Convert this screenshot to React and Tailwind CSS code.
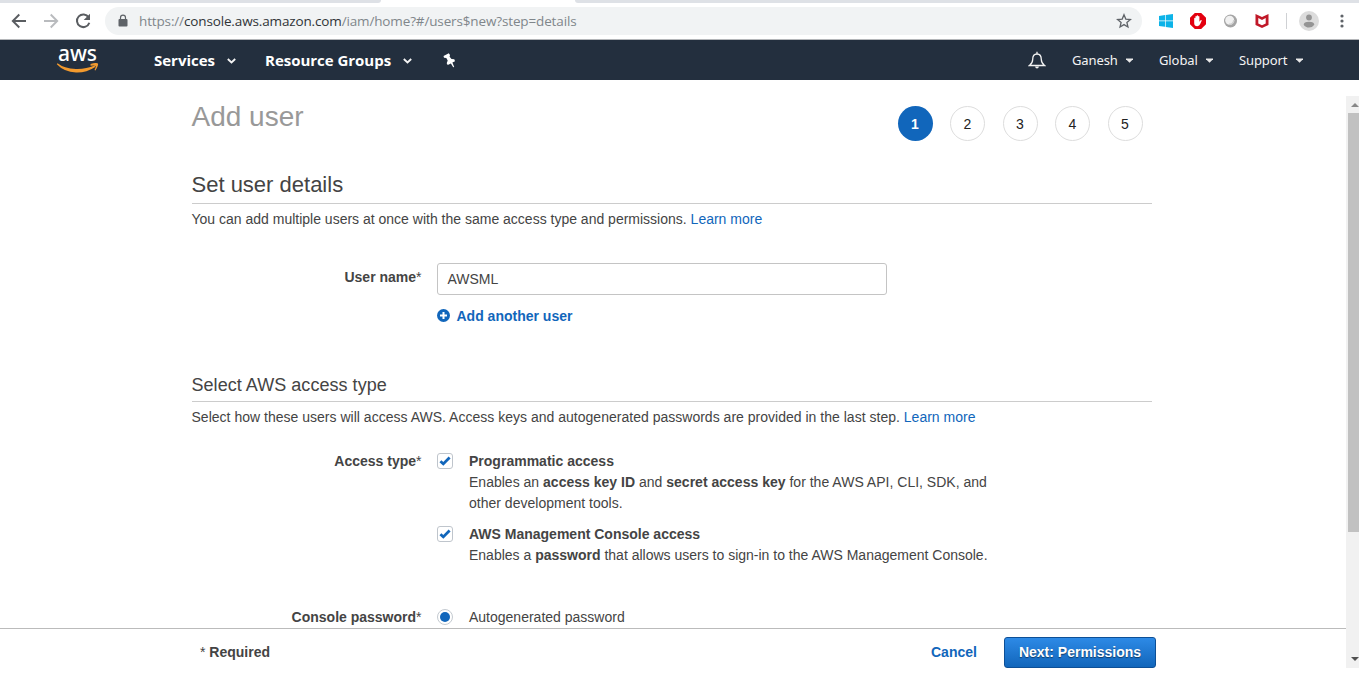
import React from "react";

const urlFont = "font-['Open_Sans',sans-serif]";

function BrowserBar() {
  return (
    <div className={`h-10 w-full shrink-0 border-b border-[#b4b6b9] bg-white ${urlFont}`}>
      <div className="flex h-[3px] w-full justify-between">
        <div className="h-[3px] w-[381px] rounded-br-[3px] bg-[#dee1e6]" />
        <div className="h-[3px] w-[784px] rounded-bl-[3px] bg-[#dee1e6]" />
      </div>
      <div className="flex h-9 items-center">
        <svg className="ml-[11px] shrink-0" width="16" height="16" viewBox="0 0 16 16" fill="none" stroke="#5a5d61" strokeWidth="1.9">
          <path d="M15 8H2M8.3 1.5 1.8 8l6.5 6.5" />
        </svg>
        <svg className="ml-4 shrink-0" width="16" height="16" viewBox="0 0 16 16" fill="none" stroke="#b9bbbe" strokeWidth="1.9">
          <path d="M1 8h13M7.700 1.500 14.200 8l-6.500 6.500" />
        </svg>
        <svg className="ml-4 shrink-0" width="16" height="16" viewBox="0 0 16 16" fill="none">
          <path d="M13.600 4.400A6.300 6.300 0 1 0 14.300 9.700" stroke="#5a5d61" strokeWidth="2" />
          <path d="M15 .8v6.300H8.700z" fill="#5a5d61" />
        </svg>
        <div className="ml-[14px] flex h-7 w-[1037px] shrink-0 items-center rounded-full bg-[#f1f3f4] pr-[10px] pl-3">
          <svg className="shrink-0" width="12" height="14" viewBox="0 0 12 14">
            <path d="M2.400 5h7.200q.9 0 .9.900v5.700q0 .9-.9.900H2.400q-.9 0-.9-.9V5.900q0-.9.900-.9z" fill="#5f6368" />
            <path d="M3.500 5.500V3.700a2.500 2.500 0 0 1 5 0v1.800" fill="none" stroke="#5f6368" strokeWidth="1.200" />
          </svg>
          <div className="ml-[10px] flex-1 text-[13.500px] leading-5 tracking-[-0.140px] whitespace-nowrap text-[#80868b]">
            https://<span className="text-[#303337]">console.aws.amazon.com</span>/iam/home?#/users$new?step=details
          </div>
          <svg className="shrink-0" width="16" height="16" viewBox="0 0 16 16" fill="none" stroke="#5f6368" strokeWidth="1.300">
            <path d="m8 1.800 1.800 4.300 4.600.4-3.500 3 1.050 4.500L8 11.600 4.050 14l1.050-4.500-3.500-3 4.600-.4z" />
          </svg>
        </div>
        <svg className="ml-[16px] shrink-0" width="16" height="16" viewBox="0 0 16 16" fill="#0cb3e8">
          <path d="M1 3l6-.9v5.400H1zM7.700 2 15 1v6.500H7.700zM1 8.300h6v5.500l-6-.9zM7.700 8.300H15v6.600l-7.300-1z" />
        </svg>
        <svg className="ml-[15px] shrink-0" width="18" height="18" viewBox="0 0 18 18">
          <path d="M5.800 1h6.400L17 5.800v6.400L12.200 17H5.800L1 12.200V5.800z" fill="#e3000f" />
          <path d="M5.200 9.300V6.200q.7-.8 1.200 0V9V4.500q.7-.9 1.300 0V8.500V3.800q.8-.9 1.400 0V8.500V4.500q.7-.8 1.300 0v5.200l1.200-1.500q.8-.4 1.200.2l-1.600 3.700q-.7 2.100-2.900 2.100Q5.200 14.200 5.200 11.200z" fill="#fff" />
        </svg>
        <svg className="ml-[16px] shrink-0" width="15" height="16" viewBox="0 0 15 16">
          <circle cx="7.500" cy="8" r="6.500" fill="#a5a5a5" />
          <circle cx="6.700" cy="7.200" r="4.500" fill="#f1f1f1" />
          <path d="M6 11.300A4.200 4.200 0 0 0 10.800 7" stroke="#d0d0d0" strokeWidth="1.500" fill="none" />
        </svg>
        <svg className="ml-[16px] shrink-0" width="16" height="16" viewBox="0 0 16 16">
          <path d="m1.500 1 6.500 3.100L14.500 1v10.900L8 15l-6.500-3.100z" fill="#c01828" />
          <path d="m4.300 5.100 3.700 1.900 3.700-1.900v5.300L8 12.200l-3.700-1.800z" fill="#fff" />
        </svg>
        <div className="ml-[16px] h-4 w-px shrink-0 bg-[#cfd1d4]" />
        <svg className="ml-[12px] shrink-0" width="20" height="20" viewBox="0 0 20 20">
          <circle cx="10" cy="10" r="10" fill="#dcdcdc" />
          <circle cx="10" cy="6.500" r="2.900" fill="#949494" />
          <path d="M4.700 13.700q0-3 5.300-3t5.300 3q-1.700 2.800-5.300 2.800t-5.300-2.800z" fill="#949494" />
        </svg>
        <svg className="ml-[21px] shrink-0" width="4" height="16" viewBox="0 0 4 16" fill="#5f6368">
          <circle cx="2" cy="3" r="1.600" /><circle cx="2" cy="8" r="1.600" /><circle cx="2" cy="13" r="1.600" />
        </svg>
      </div>
    </div>
  );
}

function Chevron({ className }) {
  return (
    <svg className={className} width="9" height="6" viewBox="0 0 9 6" fill="none" stroke="#f4f4f4" strokeWidth="1.800">
      <path d="M.8 1l3.700 3.500L8.200 1" />
    </svg>
  );
}

function Caret() {
  return (
    <svg className="ml-[9px] shrink-0" width="7" height="5" viewBox="0 0 7 5" fill="#e8e8e8">
      <path d="M0 .5h7v.8L3.500 4.700 0 1.300z" />
    </svg>
  );
}

function NavBar() {
  return (
    <div className="flex h-10 w-full shrink-0 items-center bg-[#232f3e] text-white">
      <div className="ml-[56px] flex h-10 w-[43px] shrink-0 flex-col items-center">
        <div className="h-[23px] font-['Noto_Sans',sans-serif] text-[21px] leading-[26px] font-medium tracking-[0px]">aws</div>
        <svg className="shrink-0" width="43" height="11" viewBox="0 0 43 11" fill="none">
          <path d="M1.500.3Q8 5.500 20 6 30 6.300 38.500 2.600L39.300 4Q30 9.900 20 9.500 8 9 .8 1.300z" fill="#f29a2e" />
          <path d="M34.500.900Q40.500-.7 41.900.5 42.800 2.200 39.400 7.600L38.500 7Q40 3.700 39.600 3 39 2.200 34.600 2.700z" fill="#f29a2e" />
        </svg>
      </div>
      <span className="ml-[55px] w-[61px] shrink-0 font-['Open_Sans',sans-serif] text-[15px] leading-5 font-bold tracking-[-0.020px] whitespace-nowrap">Services</span>
      <Chevron className="mt-[2px] ml-[12px] shrink-0" />
      <span className="ml-[29px] w-[127px] shrink-0 font-['Open_Sans',sans-serif] text-[15px] leading-5 font-bold tracking-[-0.020px] whitespace-nowrap">Resource Groups</span>
      <Chevron className="mt-[2px] ml-[11px] shrink-0" />
      <svg className="ml-[30px] shrink-0" width="15" height="15" viewBox="0 0 15 15" fill="#fff">
        <path d="M1.500 3 6.800.3 8 2 7.600 3.800 9.500 6 12.300 6.300 13 8.200 10.400 9.600 12.200 14 11.200 14.200 8.900 10.500 5.700 12 4.700 10.200 5.700 7.600 4.300 5.100 2 4.700z" />
      </svg>
      <div className="flex-1" />
      <svg className="mr-[-1px] shrink-0" width="18" height="18" viewBox="0 0 18 18" fill="none" stroke="#f3f3f3" strokeWidth="1.300">
        <path d="M1.500 14.500q3.200-2.500 3.200-6C4.700 4.700 6.200 3 9 3s4.300 1.700 4.300 5.500q0 3.500 3.200 6zM9 3V.8" />
        <path d="M7 15.500h4q-.5 2-2 2t-2-2z" fill="#f3f3f3" strokeWidth="0" />
      </svg>
      <div className="ml-[27px] flex w-[61px] shrink-0 items-center font-['Noto_Sans',sans-serif] text-[13px] leading-5 tracking-[-0.100px] text-[#f4f4f4]"><span className="w-[45px]">Ganesh</span><Caret /></div>
      <div className="ml-[26px] flex w-[55px] shrink-0 items-center font-['Noto_Sans',sans-serif] text-[13px] leading-5 tracking-[-0.100px] text-[#f4f4f4]"><span className="w-[38px]">Global</span><Caret /></div>
      <div className="mr-[56px] ml-[25px] flex w-[64px] shrink-0 items-center font-['Noto_Sans',sans-serif] text-[13px] leading-5 tracking-[-0.100px] text-[#f4f4f4]"><span className="w-[48px]">Support</span><Caret /></div>
    </div>
  );
}

function Steps() {
  return (
    <div className="mt-[26px] mr-[9px] flex gap-[17.5px]">
      {[1, 2, 3, 4, 5].map((n) => (
        <div
          key={n}
          className={
            n === 1
              ? "flex size-[35px] items-center justify-center rounded-full bg-[#1166bb] pt-[2px] text-[14px] font-bold text-white"
              : "flex size-[35px] items-center justify-center rounded-full border border-[#dddddd] pt-[2px] text-[14px] text-[#222]"
          }
        >
          {n}
        </div>
      ))}
    </div>
  );
}

function Label({ children }) {
  return (
    <div className="w-[230px] shrink-0 text-right font-bold">
      {children}<span className="font-normal">*</span>
    </div>
  );
}

function Check() {
  return (
    <div className="mt-[2px] flex size-4 shrink-0 items-center justify-center rounded-[3px] border border-[#bfc5cc] bg-white">
      <svg width="12" height="12" viewBox="0 0 12 12" fill="none" stroke="#1166bb" strokeWidth="2.800">
        <path d="m1.400 6.300 2.900 2.600 6.300-6.300" />
      </svg>
    </div>
  );
}

export default function App() {
  return (
    <div className="flex h-[675px] w-[1359px] flex-col overflow-hidden bg-white font-['Liberation_Sans',Arial,sans-serif] text-[14px] leading-[21px] text-[#444]">
      <BrowserBar />
      <NavBar />
      <div className="flex min-h-0 flex-1">
        <div className="flex w-[1346px] shrink-0 flex-col">
          <div className="h-[548px] shrink-0 overflow-hidden pl-[191.500px]">
            <div className="w-[960px]">
              <div className="flex h-[91px] justify-between">
                <h1 className="mt-[19px] text-[28px] leading-9 text-[#999]">Add user</h1>
                <Steps />
              </div>
              <h2 className="h-[33px] border-b border-[#ccc] text-[22px] leading-7">Set user details</h2>
              <p className="mt-[5px] whitespace-nowrap">You can add multiple users at once with the same access type and permissions. <a className="text-[#1166bb]">Learn more</a></p>
              <div className="mt-[33px] flex">
                <div className="mt-1"><Label>User name</Label></div>
                <div className="ml-[15px]">
                  <div className="flex h-8 w-[450px] items-center rounded-[3px] border border-[#c4c4c4] pl-[10px]">AWSML</div>
                  <div className="mt-[11px] flex items-center font-bold text-[#1166bb]">
                    <svg className="-mt-[2px]" width="13" height="13" viewBox="0 0 13 13"><circle cx="6.500" cy="6.500" r="6.500" fill="#1166bb" /><path d="M6.500 3v7M3 6.500h7" stroke="#fff" strokeWidth="2" /></svg>
                    <span className="ml-[7px]">Add another user</span>
                  </div>
                </div>
              </div>
              <h3 className="mt-[45px] h-[30px] border-b border-[#ccc] text-[18px] leading-[26px] tracking-[0.040px]">Select AWS access type</h3>
              <p className="mt-[5px] tracking-[0.014px] whitespace-nowrap">Select how these users will access AWS. Access keys and autogenerated passwords are provided in the last step. <a className="text-[#1166bb]">Learn more</a></p>
              <div className="mt-[23px] flex">
                <Label>Access type</Label>
                <div className="ml-[15px]">
                  <div className="flex">
                    <Check />
                    <div className="ml-[16.500px] tracking-[0.010px] whitespace-nowrap">
                      <b>Programmatic access</b><br />
                      Enables an <b>access key ID</b> and <b>secret access key</b> for the AWS API, CLI, SDK, and<br />
                      other development tools.
                    </div>
                  </div>
                  <div className="mt-[10px] flex">
                    <Check />
                    <div className="ml-[16.500px] whitespace-nowrap">
                      <b>AWS Management Console access</b><br />
                      Enables a <b>password</b> that allows users to sign-in to the AWS Management Console.
                    </div>
                  </div>
                </div>
              </div>
              <div className="mt-[41px] flex">
                <Label>Console password</Label>
                <div className="mt-[2px] ml-[15px] flex size-4 shrink-0 items-center justify-center rounded-full border border-[#c4cad0]">
                  <div className="size-[10px] rounded-full bg-[#1166bb]" />
                </div>
                <span className="ml-[16.500px]">Autogenerated password</span>
              </div>
            </div>
          </div>
          <div className="flex h-[47px] shrink-0 border-t border-[#bbb] pl-[200px] font-bold">
            <div className="mt-[13px] w-[731px]"><span className="font-normal">*</span> Required</div>
            <a className="mt-[13px] w-[73px] text-[#1166bb]">Cancel</a>
            <button className="mt-2 h-[31px] w-[152px] rounded-[3px] border border-[#0d4f96] bg-linear-to-b from-[#2d8ae6] to-[#1166bb] font-bold whitespace-nowrap text-white text-shadow-[0_1px_1px_rgba(0,0,0,0.5)]">Next: Permissions</button>
          </div>
        </div>
        <div className="mt-4 flex h-[572px] w-[13px] flex-col items-end bg-[#f1f1f1]">
          <div className="flex h-[17px] w-[11px] items-center"><svg className="ml-[3px]" width="8" height="4" viewBox="0 0 8 4" fill="#888"><path d="M0 4 4 0l4 4z" /></svg></div>
          <div className="h-[419px] w-[11px] bg-[#c1c1c1]" />
          <div className="flex-1" />
          <div className="flex h-[17px] w-[11px] items-center"><svg className="mb-[2px] ml-[3px]" width="8" height="4" viewBox="0 0 8 4" fill="#505050"><path d="m0 0 4 4 4-4z" /></svg></div>
        </div>
      </div>
    </div>
  );
}
